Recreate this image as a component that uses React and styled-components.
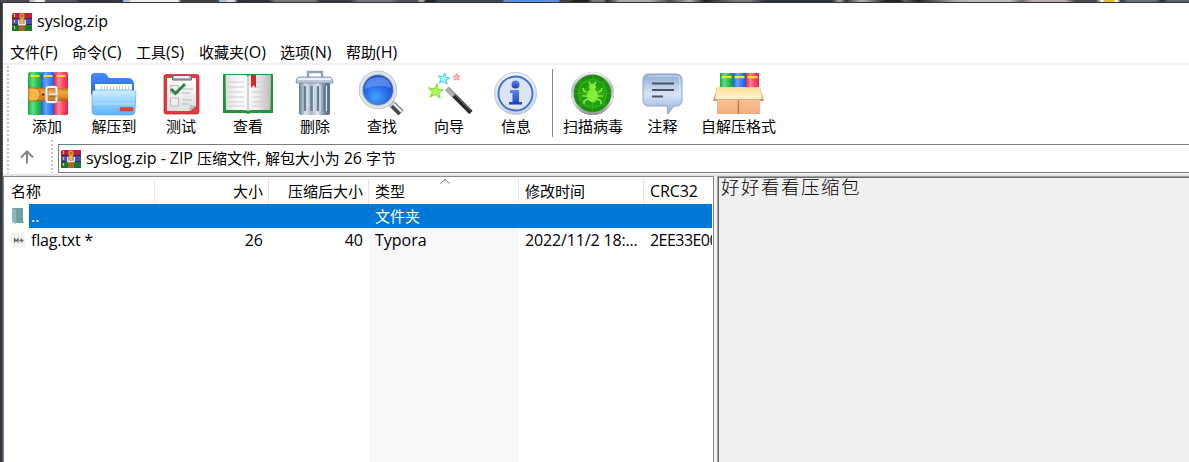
import React from "react";
import styled, { createGlobalStyle } from "styled-components";

const Global = createGlobalStyle`
  * { box-sizing: border-box; }
  body { margin: 0; background: #fff; overflow: hidden; }
`;

const Desktop = styled.div`
  display: flex;
  flex-direction: column;
  width: 1189px;
  height: 462px;
  overflow: hidden;
  background: #34363d;
  font-family: "Open Sans", "Noto Sans CJK SC", sans-serif;
  font-size: 15px;
  color: #000;
`;
const Wallpaper = styled.div`
  flex: none;
  height: 3px;
  border-bottom: 1px solid #303236;
  background: linear-gradient(90deg,
    #4b4d55 0 29px, #b6c6d6 30px 34px, #eee 36px 44px, #55585e 46px 75px, #33363c 80px 122px,
    #a8c0da 124px 129px, #eee 131px 178px, #444 181px 218px, #a8c0da 220px 226px, #ddd 228px 234px,
    #303238 238px 268px, #77777c 275px 315px, #3a3a40 320px 350px, #75747a 358px 390px, #504f57 400px 417px,
    #aaa 420px 423px, #222629 426px 434px, #414950 438px 502px, #5a8edb 505px 558px, #3f4145 561px 570px,
    #202020 575px 588px, #77767a 592px 604px, #292929 607px, #a9a9ac 620px 650px, #4a4a4c 670px, #b0afb2 690px, #202124 705px,
    #77777c 735px 750px, #30363e 765px 832px, #aaa 840px, #303338 846px, #aaa 860px 864px, #252525 886px 900px,
    #666 905px, #222 918px, #aaa 955px, #bdbdbd 975px 1010px, #77696a 1022px, #b9afae 1032px 1065px, #4c4648 1075px 1096px,
    #fff 1102px, #e5b82c 1105px 1113px, #fff 1117px, #343a43 1121px, #69717b 1128px 1155px, #252a30 1162px, #5b636d 1168px 1189px);
`;
const WindowFrame = styled.main`
  flex: 1;
  min-height: 0;
  margin-left: 3px;
  display: flex;
  flex-direction: column;
  background: #fff;
  box-shadow: -1px 0 #55565a;
`;
const TitleBar = styled.header`
  flex: none;
  display: flex;
  align-items: center;
  gap: 5px;
  height: 37px;
  padding-left: 9px;
`;
const Text = styled.span`
  display: block;
  line-height: 20px;
  white-space: pre;
  letter-spacing: ${(p) => p.$track || 0}px;
`;
const Latin = styled.span`
  font-size: 16px;
  line-height: 1;
`;
const BarText = styled(Text)`
  margin-top: -2px;
`;
const MenuBar = styled.nav`
  flex: none;
  display: flex;
  height: 25px;
  padding: 2px 0 0 7px;
  border-bottom: 2px solid #f0f0f0;
`;
const MenuItem = styled(Text)`
  flex: none;
  width: ${(p) => p.$width}px;
`;
const ToolBar = styled.section`
  flex: none;
  display: flex;
  height: 75px;
  padding: 1px 0 0 4px;
`;
const Grip = styled.i`
  flex: none;
  width: 2px;
  height: ${(p) => p.$height}px;
  background: repeating-linear-gradient(180deg, #c2c2c2 0 2px, #fff 2px 4px);
`;
const Buttons = styled.div`
  display: flex;
  padding-left: ${(p) => p.$inset}px;
`;
const ToolButton = styled.div`
  flex: none;
  display: flex;
  flex-direction: column;
  align-items: center;
  width: ${(p) => p.$width || 67}px;
  padding-top: 4px;
`;
const ToolLabel = styled(Text)`
  margin-top: -2px;
`;
const Separator = styled.i`
  flex: none;
  width: 1px;
  height: 68px;
  margin: 3px 0 0 2px;
  background: #8a8a8a;
`;
const Glyph = styled.svg`
  flex: none;
  display: block;
  overflow: visible;
`;
const AddressBar = styled.section`
  flex: none;
  display: flex;
  height: 36px;
  padding-left: 4px;
  border-bottom: 2px solid #e3e3e3;
`;
const UpButton = styled.div`
  flex: none;
  display: flex;
  align-items: center;
  justify-content: center;
  width: 42px;
  height: 33px;
  padding-right: 6px;
`;
const AddressField = styled.div`
  flex: 1;
  display: flex;
  align-items: center;
  gap: 5px;
  height: 29px;
  margin: 4px 0 0 5px;
  padding-left: 2px;
  border: 1px solid #7a7a7a;
  border-right: 0;
`;
const Panes = styled.section`
  flex: 1;
  min-height: 0;
  display: flex;
  gap: 3px;
  background: #f0f0f0;
`;
const FileList = styled.div`
  flex: none;
  display: flex;
  flex-direction: column;
  width: 711px;
  padding-right: 1px;
  background: #fff;
  border: solid #828790;
  border-width: 1px 1px 0 1px;
`;
const Row = styled.div`
  flex: none;
  display: flex;
  height: 24px;
`;
const HeaderRow = styled(Row)`
  height: 27px;
  padding-top: 1px;
`;
const Cell = styled.div`
  flex: none;
  position: relative;
  display: flex;
  align-items: center;
  justify-content: ${(p) => (p.$end ? "flex-end" : "flex-start")};
  width: ${(p) => p.$width}px;
  padding: 0 6px;
  overflow: hidden;
  color: ${(p) => (p.$selected ? "#fff" : "#000")};
  background: ${(p) => (p.$selected ? "#0078d7" : p.$sorted ? "#f7f7f7" : "transparent")};
`;
const NameCell = styled(Cell)`
  padding-left: 2px;
`;
const HeaderCell = styled(Cell)`
  border-right: ${(p) => (p.$last ? 0 : 1)}px solid #e5e5e5;
  padding-right: 5px;
  padding-left: ${(p) => p.$left || 6}px;
`;
const SortMark = styled(Glyph)`
  position: absolute;
  left: 71px;
  top: 0;
`;
const FileIcon = styled.div`
  flex: none;
  display: flex;
  align-items: center;
  width: 25px;
  padding-left: 7px;
`;
const Filler = styled.div`
  flex: 1;
  display: flex;
  padding-left: 365px;
`;
const CommentPane = styled.aside`
  flex: 1;
  padding: 0 0 0 3px;
  background: #f0f0f0;
  border: solid #a0a0a0;
  border-width: 1px 0 0 1px;
  box-shadow: inset 1px 1px #696969;
`;
const CommentText = styled.p`
  margin: 0;
  font: 300 18.5px/19px "Noto Sans CJK SC", sans-serif;
  letter-spacing: 1.5px;
`;

const Gradient = ({ id, stops, vertical }) => (
  <linearGradient id={id} x1="0" y1="0" x2={vertical ? 0 : 1} y2={vertical ? 1 : 0}>
    {stops.map((c, i) => (
      <stop key={i} offset={i / (stops.length - 1)} stopColor={c} />
    ))}
  </linearGradient>
);

const Definitions = styled.svg`
  position: absolute;
`;

const Gradients = () => (
  <Definitions width="0" height="0">
    <defs>
      <Gradient id="green" stops={["#1ba544", "#5fe07e", "#2bbd52", "#149a3c"]} />
      <Gradient id="blue" stops={["#2257dc", "#62a8ff", "#3b80f5", "#2157d6"]} />
      <Gradient id="red" stops={["#dd2048", "#ff8598", "#fb4763", "#de2650"]} />
      <Gradient id="belt" vertical stops={["#c46a18", "#f7a844", "#e58a2a", "#b05c10"]} />
      <Gradient id="folder" vertical stops={["#d3efff", "#92d0ff", "#5cb1fb"]} />
      <Gradient id="folderBack" vertical stops={["#4a8cfb", "#1f5edc"]} />
      <Gradient id="paper" vertical stops={["#fff", "#dedede"]} />
      <Gradient id="page" stops={["#ddd", "#fff", "#eee", "#bbb"]} />
      <Gradient id="can" stops={["#62788f", "#dbe5ee", "#a8b9ca", "#e0e8ef", "#7c91a6", "#53687f"]} />
      <Gradient id="metal" vertical stops={["#eef3f7", "#b4bbc1", "#e7ecef", "#929a9f"]} />
      <Gradient id="ring" vertical stops={["#f3f7fc", "#c5d1e3"]} />
      <Gradient id="bubble" vertical stops={["#8fabd6", "#d8e5f6", "#93aed5"]} />
      <Gradient id="box" vertical stops={["#ffcfa0", "#f3ad80"]} />
      <Gradient id="lid" vertical stops={["#ffdc98", "#fff4cf"]} />
      <Gradient id="info" vertical stops={["#5d87ee", "#173fb6"]} />
      <radialGradient id="lens" cx=".45" cy=".7" r=".7">
        <stop offset="0" stopColor="#43a5ff" />
        <stop offset=".5" stopColor="#2868e8" />
        <stop offset="1" stopColor="#1940b8" />
      </radialGradient>
      <radialGradient id="radar">
        <stop offset="0" stopColor="#35b518" />
        <stop offset="1" stopColor="#128a08" />
      </radialGradient>
    </defs>
  </Definitions>
);

const AddIcon = () => (
  <>
    {["green", "blue", "red"].map((c, i) => (
      <g key={c}>
        <path d={`M${6 + i * 13} 2h12l1 2v40l-1 1H${6 + i * 13}l-1-1V4z`} fill={`url(#${c})`} />
        <path d={`M${7.5 + i * 13} 5h9v2h-9z`} fill="#ffd52e" />
      </g>
    ))}
    <rect x="5" y="18" width="40" height="13" rx="2" fill="url(#belt)" />
    <path d="M6 18h5q6 1 6 6.500t-6 6.500H6z" fill="#f1b743" stroke="#a35b10" strokeWidth=".7" />
    <path d="M6 20h32M6 29h32" stroke="#ffd08a" strokeWidth=".6" strokeDasharray="1.500 1" />
    <circle cx="20" cy="24.500" r="1.300" fill="#60300a" />
    <rect x="23.500" y="17" width="10" height="15" rx="1.800" fill="none" stroke="#909090" strokeWidth="3" />
    <rect x="23.500" y="17" width="10" height="15" rx="1.800" fill="none" stroke="#f4f4f4" strokeWidth="2" />
    <path d="M26 24.500h8" stroke="#eee" strokeWidth="2.200" />
    <path d="M26 26h8" stroke="#684020" strokeWidth=".8" />
  </>
);
const ExtractIcon = () => (
  <>
    <path d="M1 25V6q0-3 4-3h8q3 0 4 2l2 3h19q6 0 6 7v12z" fill="url(#folderBack)" />
    <path d="M5 14h37v13H5z" fill="#fdfdfd" />
    <path d="M11 18h29" stroke="#bcc5cc" strokeWidth="3" strokeDasharray="1 2" />
    <path d="M2 23q0-3 4-3h36q4 0 4 3l-1 18q0 4-4 4H7q-5 0-5-4z" fill="url(#folder)" stroke="#5aa9ee" strokeWidth=".7" />
    <path d="M3 34h42" stroke="#d3edff" opacity=".6" />
    <rect x="30" y="37.500" width="13" height="3.500" rx="1" fill="#e94036" stroke="#bd332e" strokeWidth=".5" />
  </>
);
const TestIcon = () => (
  <>
    <rect x="7" y="4.500" width="35" height="39.500" rx="2" fill="#df3b3e" stroke="#bb2529" strokeWidth=".7" />
    <path d="M10 8h29v28l-6 5H10z" fill="url(#paper)" />
    <path d="M32 41l1-6 6 1z" fill="#bbb" />
    <path d="M15.500 10V5.500h19V10z" fill="#aab1b8" stroke="#666" />
    <path d="M17 7h15" stroke="#eef" strokeWidth="2" />
    <path d="M13.500 15.500h8v8h-8zM13.500 28h8v8h-8z" fill="#eee" stroke="#bbb" />
    <path d="M14 19l4.500 4.500L28 14" fill="none" stroke="#28843f" strokeWidth="3" />
    <path d="M26 19h10M25 23h8M25 30h10M25 34h7" stroke="#b5b5b5" />
  </>
);
const ViewIcon = () => (
  <>
    <path d="M-1 4h50v39H27l-3 1-3-1H-1z" fill="#22953a" />
    <path d="M1.500 5H21q3 0 3 3v33q-1-1-4-1H2zM47 5H27q-3 0-3 3v33q1-1 4-1h18.500z" fill="url(#page)" />
    <path d="M4 12h16M4 17h16M4 22h16M4 27h16M4 32h16M4 36h16M28 12h16M28 17h16M28 22h16M28 27h16M28 32h16M28 36h16" stroke="#ccc" />
    <path d="M24 7v34" stroke="#999" strokeWidth=".8" />
    <path d="M27 5h5v13l-2.500-3-2.500 3z" fill="#d9242c" />
  </>
);
const DeleteIcon = () => (
  <>
    <path d="M17 8V2h14v6" fill="none" stroke="#8fa1b3" strokeWidth="2.300" />
    <path d="M8 12h31v31q0 2-3 2H11q-3 0-3-2z" fill="url(#can)" />
    <path d="M14 16v25M20.500 16v25M27 16v25M33.500 16v25" stroke="#6a8098" strokeWidth="2.600" />
    <path d="M16 16v25M22.500 16v25M29 16v25M35.500 16v25" stroke="#dce6ef" />
    <path d="M8 7h31q3 1 3 5v1H5v-1q0-4 3-5z" fill="#b9c9d8" stroke="#7b91a6" strokeWidth=".8" />
    <path d="M7 9h33" stroke="#edf3f8" strokeWidth="2" />
  </>
);
const FindIcon = () => (
  <>
    <path d="M31 31l12 12" stroke="#45484d" strokeWidth="7" />
    <path d="M33 31l11 11" stroke="#e6e8ea" strokeWidth="2.500" />
    <path d="M30 30l5 5" stroke="#c3c8cd" strokeWidth="7" />
    <circle cx="20" cy="20" r="17" fill="url(#lens)" stroke="#99a5b0" strokeWidth="4.300" />
    <circle cx="20" cy="20" r="17.200" fill="none" stroke="#dce4ea" strokeWidth="3" />
    <path d="M7 19q0-11 13-12 12 0 13 11-11-5-26 1z" fill="#8ab5ff" opacity=".5" />
  </>
);
const star = "M0-7l2 5 5 0-4 3.500 2 5-5-3-5 3 1.500-5-4-3.500 5.500 0z";
const WizardIcon = () => (
  <>
    <path d={star} transform="translate(11 21) rotate(8)" fill="#b9f45a" stroke="#85de38" />
    <path d={star} transform="translate(19 8.500) rotate(10) scale(.75)" fill="#afffff" stroke="#48cdf2" strokeWidth="1.400" />
    <path d={star} transform="translate(31.500 7) scale(.5)" fill="#ffc3bf" stroke="#f08686" strokeWidth="1.800" />
    <path d="M22 18.500l24 24" stroke="#2c2c2c" strokeWidth="4.600" />
    <path d="M22 18.500l7 7" stroke="#b0b0b0" strokeWidth="4.600" />
    <path d="M24 18.500l21.500 21.500" stroke="#888" strokeWidth="1" />
  </>
);
const InfoIcon = () => (
  <>
    <circle cx="23.500" cy="23.500" r="21" fill="url(#ring)" stroke="#bcc8d6" />
    <circle cx="23.500" cy="23.500" r="17" fill="#dae4f3" stroke="#3f6cd2" strokeWidth="1.800" />
    <circle cx="23.500" cy="14.500" r="4" fill="url(#info)" />
    <path d="M18 20h9v12h3v2.500H17V32h3.500v-9H18z" fill="url(#info)" />
  </>
);
const VirusIcon = () => (
  <>
    <circle cx="23.500" cy="23.500" r="20" fill="url(#radar)" stroke="#8e9790" strokeWidth="3" />
    <circle cx="23.500" cy="23.500" r="20.300" fill="none" stroke="url(#metal)" strokeWidth="2.200" />
    <path d="M23.500 5v37M5 23.500h37M12 8v31M35 8v31M8 12h31M8 35h31" stroke="#57cc38" strokeWidth=".7" opacity=".5" />
    <circle cx="23.500" cy="23.500" r="14" fill="none" stroke="#43bb27" strokeWidth=".8" />
    <g fill="#83ee38" stroke="#83ee38">
      <ellipse cx="23.500" cy="25.500" rx="5" ry="6.500" />
      <circle cx="23.500" cy="17" r="3" />
      <path d="M18 22l-3-1-1-3M18 26h-5M19 29l-4 2v3M29 22l3-1 1-3M29 26h5M28 29l4 2v3M22 15l-2-3M25 15l2-3" fill="none" strokeWidth="1.600" />
    </g>
  </>
);
const CommentIcon = () => (
  <>
    <path d="M10 4h27q6 0 6 6v20q0 6-6 6h-2l-6 8-1-8H10q-6 0-6-6V10q0-6 6-6z" fill="url(#bubble)" stroke="#8ca4c8" />
    <path d="M9 6h29q3 0 3 4v19" fill="none" stroke="#e8f1fc" opacity=".7" />
    <path d="M13 13.500h22M13 20h22M13 26.500h11" stroke="#4b5362" strokeWidth="1.800" />
  </>
);
const SfxIcon = () => (
  <>
    {["green", "blue", "red"].map((c, i) => (
      <g key={c}>
        <path d={`M${5 + i * 13} 3h13v17h-13z`} fill={`url(#${c})`} />
        <path d={`M${6.5 + i * 13} 6h10v2.200h-10z`} fill="#ffe128" />
      </g>
    ))}
    <path d="M2 18h43v26H2z" fill="url(#box)" />
    <path d="M2 18l-4 13h4zM45 18l4 13h-4z" fill="#d99262" />
    <path d="M2 17h43l2 12H0z" fill="url(#lid)" />
    <path d="M2 17.500h43" stroke="#fbd693" strokeWidth="1" />
    <path d="M23.500 29v15" stroke="#ba7652" strokeWidth="1.300" />
    <path d="M3 29.500h41" stroke="#eba679" />
  </>
);

const ArchiveIcon = () => (
  <Glyph width="20" height="18" viewBox="0 0 20 18">
    <path d="M0 1l2-1h18v5H0z" fill="#b81f43" />
    <path d="M0 6h20v6H0z" fill="#4b4db3" />
    <path d="M0 12h20v6H0z" fill="#17773a" />
    <path d="M0 5.500h20M0 11.500h20" stroke="#352a44" />
    <path d="M2.500 1v3M2.500 7v3M2.500 13v3" stroke="#f0bb2f" strokeWidth="1.200" />
    <path d="M7.500 1q2.500-2 5 0v17h-5z" fill="#dc922c" />
    <path d="M7.500 12h5v6h-5z" fill="#b85d1b" />
    <path d="M6.800 7v4.500h6.400V7" fill="none" stroke="#eee" strokeWidth="1.400" />
    <path d="M10 6v4" stroke="#f8e2a3" />
    <path d="M9 3h2" stroke="#774015" />
  </Glyph>
);

const menus = [["文件", "(F)", 62], ["命令", "(C)", 64], ["工具", "(S)", 63], ["收藏夹", "(O)", 81], ["选项", "(N)", 66], ["帮助", "(H)", 60]];
const mainTools = [["添加", AddIcon], ["解压到", ExtractIcon], ["测试", TestIcon], ["查看", ViewIcon], ["删除", DeleteIcon], ["查找", FindIcon], ["向导", WizardIcon], ["信息", InfoIcon]];
const extraTools = [["扫描病毒", VirusIcon, 70], ["注释", CommentIcon, 69], ["自解压格式", SfxIcon, 83]];

const Tool = ({ label, Icon, width }) => (
  <ToolButton $width={width}>
    <Glyph width="48" height="48" viewBox="0 0 48 48"><Icon /></Glyph>
    <ToolLabel>{label}</ToolLabel>
  </ToolButton>
);
const LatinText = ({ children, track }) => (
  <Text $track={track}><Latin>{children}</Latin></Text>
);

export default function App() {
  return (
    <Desktop>
      <Global />
      <Gradients />
      <Wallpaper />
      <WindowFrame>
        <TitleBar><ArchiveIcon /><BarText><Latin>syslog.zip</Latin></BarText></TitleBar>
        <MenuBar>
          {menus.map(([name, key, w]) => <MenuItem key={name} $width={w}>{name}<Latin>{key}</Latin></MenuItem>)}
        </MenuBar>
        <ToolBar>
          <Grip $height={74} />
          <Buttons $inset={4.5}>
            {mainTools.map(([l, I]) => <Tool key={l} label={l} Icon={I} />)}
          </Buttons>
          <Separator />
          <Buttons $inset={5.5}>
            {extraTools.map(([l, I, w]) => <Tool key={l} label={l} Icon={I} width={w} />)}
          </Buttons>
        </ToolBar>
        <AddressBar>
          <Grip $height={33} />
          <UpButton>
            <Glyph width="16" height="16" viewBox="0 0 16 16" fill="none" stroke="#858585" strokeWidth="2">
              <path d="M8 14.500V2.500M2 8.500l6-6 6 6" />
            </Glyph>
          </UpButton>
          <Grip $height={33} />
          <AddressField>
            <ArchiveIcon />
            <BarText $track={-0.06}>
              <Latin>syslog.zip - ZIP </Latin>压缩文件<Latin>, </Latin>解包大小为<Latin> 26 </Latin>字节
            </BarText>
          </AddressField>
        </AddressBar>
        <Panes>
          <FileList>
            <HeaderRow>
              <HeaderCell $width={151} $left={7}><Text>名称</Text></HeaderCell>
              <HeaderCell $width={114} $end><Text>大小</Text></HeaderCell>
              <HeaderCell $width={100} $end><Text>压缩后大小</Text></HeaderCell>
              <HeaderCell $width={150}>
                <Text>类型</Text>
                <SortMark width="10" height="6" viewBox="0 0 10 6" fill="none" stroke="#666"><path d="M.5 5.500L5 1.300 9.500 5.500" /></SortMark>
              </HeaderCell>
              <HeaderCell $width={125}><Text>修改时间</Text></HeaderCell>
              <HeaderCell $width={68} $last><LatinText track={-0.1}>CRC32</LatinText></HeaderCell>
            </HeaderRow>
            <Row>
              <FileIcon>
                <Glyph width="13" height="16" viewBox="0 0 13 16">
                  <path d="M1 0h11v13l1 2H5z" fill="#6fa3a3" /><path d="M1 0l4 2v14l-4-2z" fill="#85b9bd" />
                </Glyph>
              </FileIcon>
              <NameCell $width={340} $selected><LatinText>..</LatinText></NameCell>
              <Cell $width={150} $selected><Text>文件夹</Text></Cell>
              <Cell $width={193} $selected />
            </Row>
            <Row>
              <FileIcon>
                <Glyph width="15" height="17" viewBox="0 0 15 17">
                  <path d="M0 1h13l2 14H2z" fill="#f1f1f1" />
                  <path d="M3.500 10.500V7l1.700 2L7 7v3.500M8.500 8.500h4M10.500 6.500v4" stroke="#666" strokeWidth="1.300" fill="none" />
                </Glyph>
              </FileIcon>
              <NameCell $width={126}><LatinText track={-0.2}>flag.txt *</LatinText></NameCell>
              <Cell $width={114} $end><LatinText>26</LatinText></Cell>
              <Cell $width={100} $end><LatinText>40</LatinText></Cell>
              <Cell $width={150} $sorted><LatinText>Typora</LatinText></Cell>
              <Cell $width={125}><LatinText track={-0.15}>2022/11/2 18:...</LatinText></Cell>
              <Cell $width={68}><LatinText track={-0.55}>2EE33E00</LatinText></Cell>
            </Row>
            <Filler><Cell $width={150} $sorted /></Filler>
          </FileList>
          <CommentPane><CommentText>好好看看压缩包</CommentText></CommentPane>
        </Panes>
      </WindowFrame>
    </Desktop>
  );
}
